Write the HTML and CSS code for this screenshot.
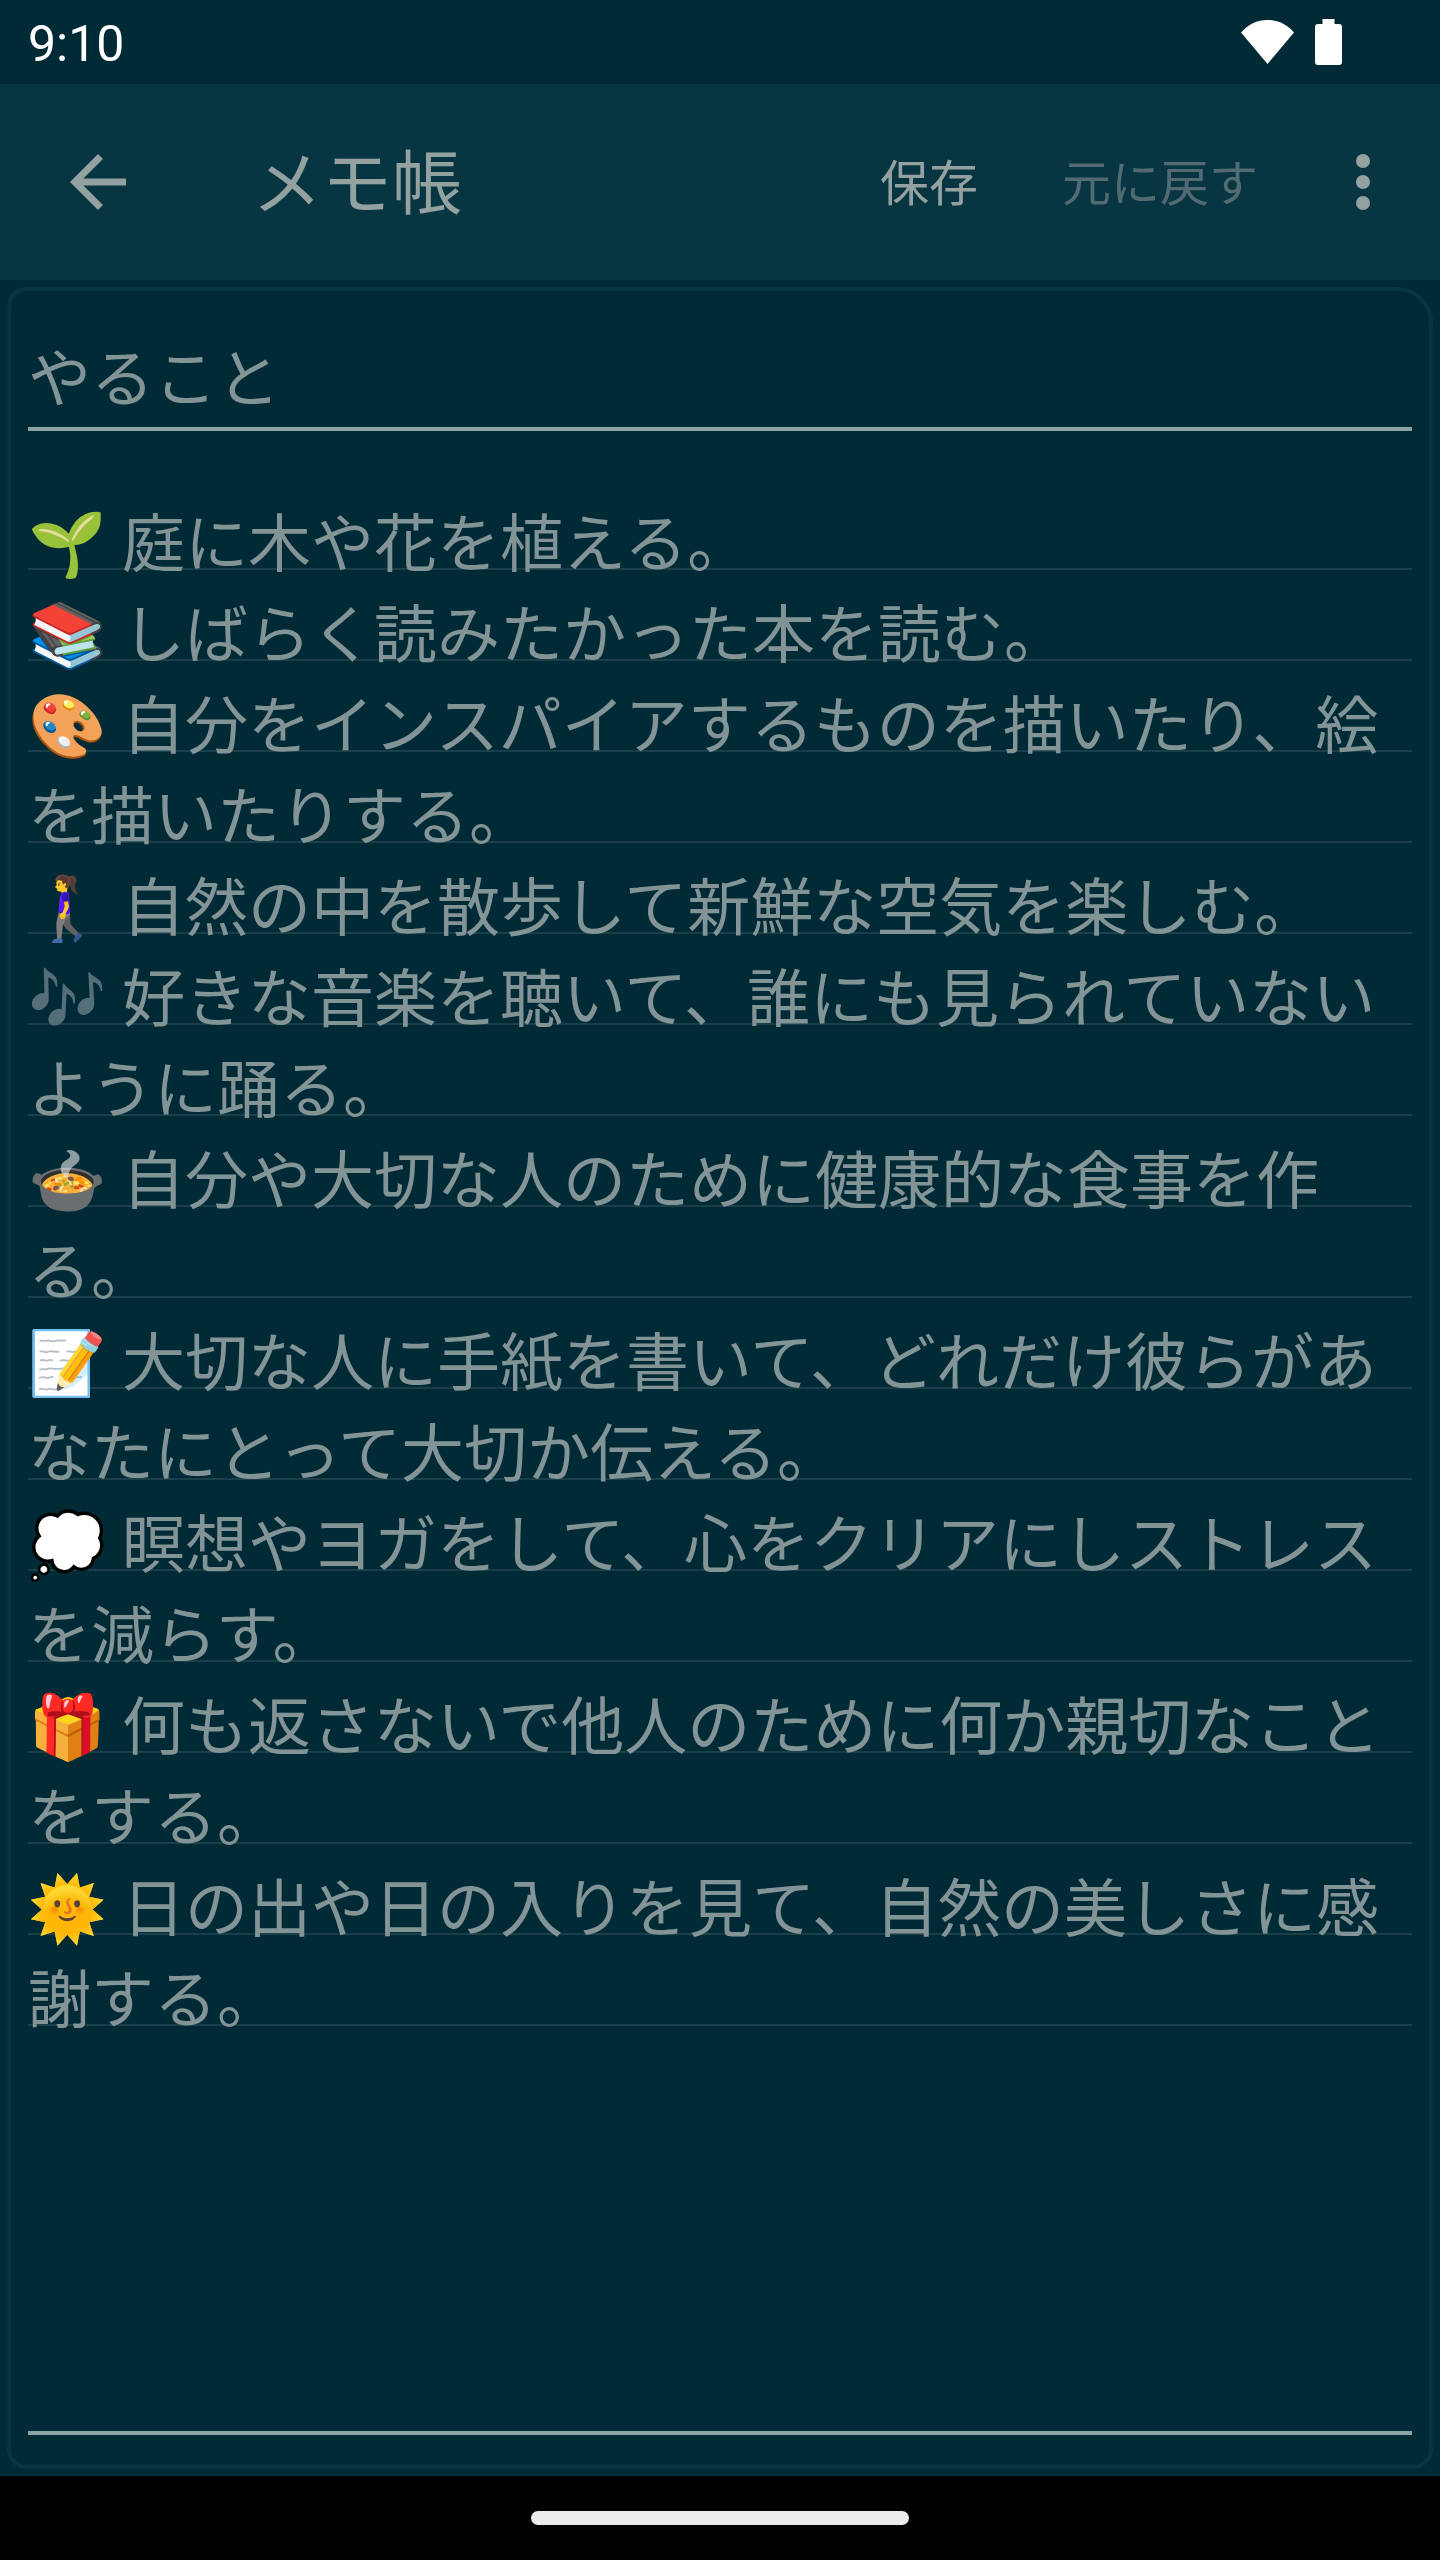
FILE: index.html
```html
<!DOCTYPE html>
<html lang="ja">
<head>
  <meta charset="UTF-8">
  <meta name="viewport" content="width=device-width, initial-scale=1">
  <title>メモ帳</title>
  <link rel="stylesheet" href="styles.css">
</head>
<body>
<div class="status-bar">
  <span class="clock">9:10</span>
  <svg class="wifi" viewBox="0 0 53 44"><path d="M0 12.500C7 4.500 16 0 26.500 0S46 4.500 53 12.500L26.500 44z"/></svg>
  <svg class="battery" viewBox="0 0 27 46"><path d="M7.500 0h12v5H24a3 3 0 0 1 3 3v35a3 3 0 0 1-3 3H3a3 3 0 0 1-3-3V8a3 3 0 0 1 3-3h4.500z"/></svg>
</div>

<header class="toolbar">
  <button class="icon-btn" type="button" aria-label="戻る">
    <svg viewBox="0 0 24 24"><path d="M20 11H7.830l5.590-5.590L12 4l-8 8 8 8 1.410-1.410L7.830 13H20v-2z"/></svg>
  </button>
  <h1>メモ帳</h1>
  <div class="actions">
    <button class="action" type="button">保存</button>
    <button class="action" type="button" disabled>元に戻す</button>
  </div>
  <button class="icon-btn" type="button" aria-label="その他">
    <svg viewBox="0 0 24 24"><circle cx="12" cy="6" r="2"/><circle cx="12" cy="12" r="2"/><circle cx="12" cy="18" r="2"/></svg>
  </button>
</header>

<main class="note">
  <input class="note-title" type="text" value="やること" aria-label="タイトル">
  <textarea class="note-body" aria-label="本文" spellcheck="false">🌱 庭に木や花を植える。
📚 しばらく読みたかった本を読む。
🎨 自分をインスパイアするものを描いたり、絵を描いたりする。
🚶‍♀️ 自然の中を散歩して新鮮な空気を楽しむ。
🎶 好きな音楽を聴いて、誰にも見られていないように踊る。
🍲 自分や大切な人のために健康的な食事を作る。
📝 大切な人に手紙を書いて、どれだけ彼らがあなたにとって大切か伝える。
💭 瞑想やヨガをして、心をクリアにしストレスを減らす。
🎁 何も返さないで他人のために何か親切なことをする。
🌞 日の出や日の入りを見て、自然の美しさに感謝する。</textarea>
</main>

<footer class="nav-bar"><span class="handle"></span></footer>
</body>
</html>
```

FILE: styles.css
```css
* {
  box-sizing: border-box;
}
html,
body {
  height: 100%;
}
body {
  margin: 0;
  display: flex;
  flex-direction: column;
  background: #002b36;
  color: #839496;
  font-family: Roboto, "Noto Sans CJK JP", "Noto Color Emoji", sans-serif;
}
button,
input,
textarea {
  margin: 0;
  padding: 0;
  border: 0;
  border-radius: 0;
  outline: 0;
  background: none;
  color: inherit;
  font-family: inherit;
}
svg {
  display: block;
  fill: currentColor;
}

/* status bar */
.status-bar {
  flex: none;
  display: flex;
  align-items: center;
  height: 84px;
  padding: 0 98px 0 28px;
  color: #fff;
}
.clock {
  flex: 1;
  padding-top: 4px;
  font-size: 50px;
  line-height: 60px;
}
.wifi {
  width: 53px;
  height: 44px;
  margin-right: 21px;
}
.battery {
  width: 27px;
  height: 46px;
}

/* toolbar */
.toolbar {
  flex: none;
  display: flex;
  align-items: center;
  height: 196px;
  padding: 0 35px 0 56px;
  background: #073642;
  color: #93a1a1;
}
.toolbar h1 {
  flex: 1;
  margin: 0 0 0 112px;
  padding-top: 6px;
  font-size: 70px;
  font-weight: 400;
  line-height: 98px;
}
.icon-btn,
.icon-btn svg {
  width: 84px;
  height: 84px;
}
.actions {
  display: flex;
  gap: 84px;
  margin-right: 63px;
}
.action {
  padding-top: 6px;
  font-size: 49px;
  line-height: 84px;
}
.action:disabled {
  color: #526b72;
}

/* note */
.note {
  flex: 1;
  display: flex;
  flex-direction: column;
  margin: 7px;
  padding: 35px 17px 30px;
  border: 4px solid #073642;
  border-radius: 20px 36px 20px 20px;
}
.note-title,
.note-body {
  width: 100%;
  border-bottom: 4px solid #8aa3a5;
  font-size: 63px;
  line-height: 91px;
}
.note-title {
  height: 105px;
  padding: 2px 0 8px;
}
.note-body {
  flex: 1;
  margin-top: 68px;
  resize: none;
  overflow: hidden;
  /* ruled paper, one rule per written line */
  background: repeating-linear-gradient(transparent 0 69px, #1a3f49 69px 71px, transparent 71px 91px) no-repeat 0 0 / 100% 1547px;
}

/* gesture bar */
.nav-bar {
  flex: none;
  display: flex;
  align-items: center;
  justify-content: center;
  height: 84px;
  background: #000;
}
.handle {
  width: 378px;
  height: 14px;
  border-radius: 7px;
  background: #ebebeb;
}
```
